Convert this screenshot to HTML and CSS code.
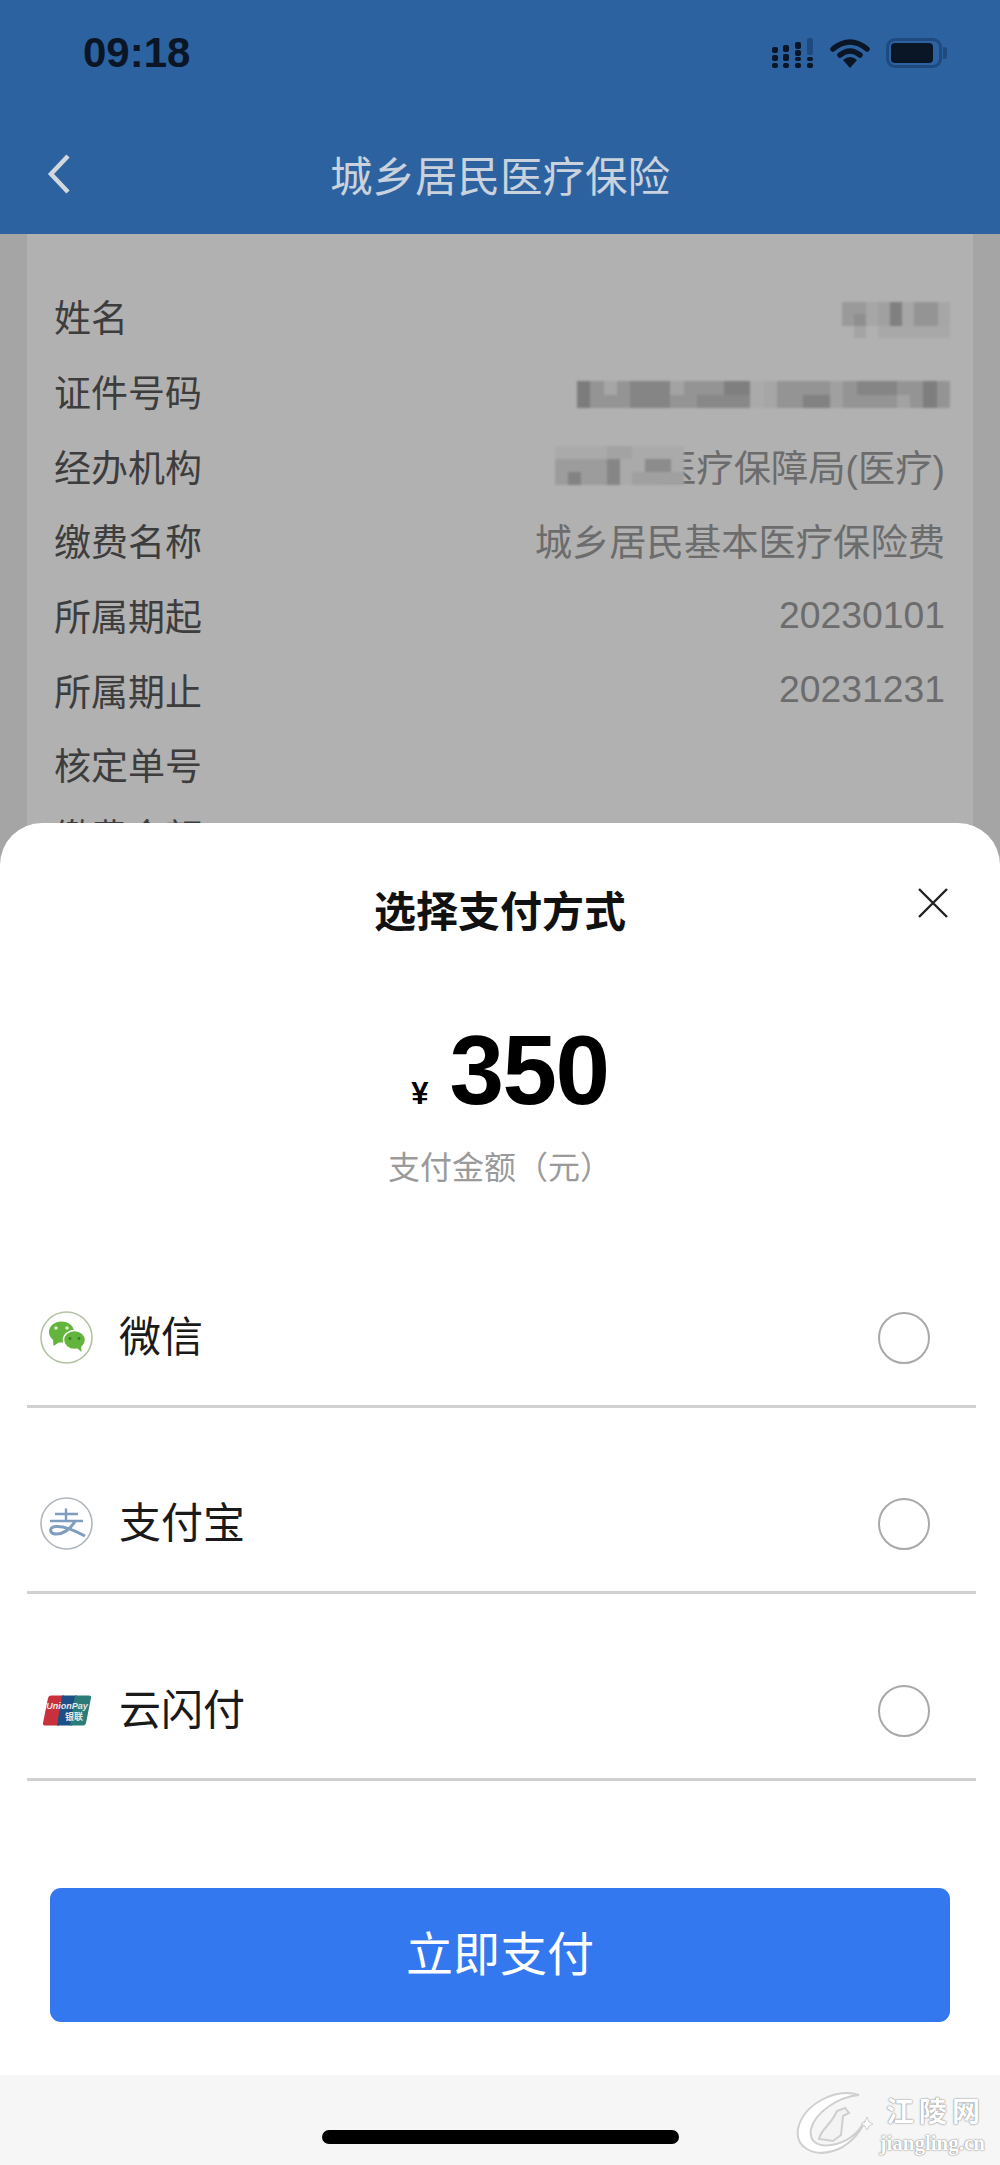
FILE: index.html
```html
<!doctype html>
<html>
<head>
	<meta charset="utf-8">
	<title>城乡居民医疗保险</title>
	<link rel="stylesheet" href="styles.css">
</head>
<body>
	<div class="page">
		<!-- 顶部蓝色区域 -->
		<div class="topbar">
			<div class="status">
				<span class="time">09:18</span>
				<div class="status-icons">
					<svg class="ic-signal" width="42" height="30" viewBox="0 0 42 30">
						<g fill="#0a1526">
							<rect x="0" y="9" width="6" height="6" rx="2"/><rect x="0" y="17" width="6" height="6" rx="2"/><rect x="0" y="25" width="6" height="5" rx="2"/>
							<rect x="11" y="7" width="6" height="7" rx="2"/><rect x="11" y="16" width="6" height="7" rx="2"/><rect x="11" y="25" width="6" height="5" rx="2"/>
							<rect x="23" y="4" width="6" height="7" rx="2"/><rect x="23" y="12" width="6" height="6" rx="2"/><rect x="23" y="19" width="6" height="4" rx="2"/><rect x="23" y="25" width="6" height="5" rx="2"/>
							<rect x="35" y="19" width="6" height="4" rx="2"/><rect x="35" y="25" width="6" height="5" rx="2"/>
						</g>
						<rect x="35" y="0" width="6" height="17" rx="2" fill="#1f4a80"/>
					</svg>
					<svg class="ic-wifi" width="40" height="30" viewBox="0 0 40 30">
						<path d="M3 11 Q20 -3 37 11" fill="none" stroke="#0a1526" stroke-width="5.5" stroke-linecap="round"/>
						<path d="M10 17 Q20 9 30 17" fill="none" stroke="#0a1526" stroke-width="5.5" stroke-linecap="round"/>
						<path d="M13 22 Q20 16 27 22 L20 30 Z" fill="#0a1526"/>
					</svg>
					<div class="battery"><span class="battery-in"></span><span class="battery-cap"></span></div>
				</div>
			</div>
			<div class="nav">
				<svg class="back" width="24" height="40" viewBox="0 0 24 40">
					<path d="M21 2 L4 20 L21 38" fill="none" stroke="#d3d8de" stroke-width="4.5"/>
				</svg>
				<span class="nav-title">城乡居民医疗保险</span>
			</div>
		</div>

		<!-- 被遮住的缴费信息 -->
		<div class="info">
			<div class="info-row">
				<span class="lab">姓名</span>
				<svg class="mosaic mosaic-name" width="108" height="39" viewBox="0 0 9 3" shape-rendering="crispEdges">
					<rect width="9" height="3" fill="#a6a6a6"/>
					<rect x="0" y="0" width="2" height="2" fill="#9a9a9a"/>
					<rect x="1" y="1" width="1" height="1" fill="#8f8f8f"/>
					<rect x="3" y="0" width="1" height="2" fill="#a0a0a0"/>
					<rect x="4" y="0" width="1" height="2" fill="#808080"/>
					<rect x="6" y="0" width="2" height="2" fill="#949494"/>
					<rect x="0" y="2" width="1" height="1" fill="#b1b1b1"/>
					<rect x="1" y="2" width="1" height="1" fill="#a4a4a4"/>
					<rect x="2" y="2" width="1" height="1" fill="#b1b1b1"/>
					<rect x="3" y="2" width="6" height="1" fill="#a8a8a8"/>
				</svg>
			</div>
			<div class="info-row">
				<span class="lab">证件号码</span>
				<svg class="mosaic mosaic-id" width="373" height="27" viewBox="0 0 28 2" shape-rendering="crispEdges">
					<rect width="28" height="2" fill="#949494"/>
					<rect x="0" y="0" width="1" height="2" fill="#7c7c7c"/>
					<rect x="2" y="0" width="1" height="1" fill="#a6a6a6"/>
					<rect x="4" y="0" width="3" height="2" fill="#858585"/>
					<rect x="7" y="0" width="1" height="1" fill="#a3a3a3"/>
					<rect x="9" y="1" width="4" height="1" fill="#888"/>
					<rect x="11" y="0" width="2" height="1" fill="#7f7f7f"/>
					<rect x="13" y="0" width="1" height="2" fill="#aaa"/>
					<rect x="14" y="0" width="1" height="2" fill="#a6a6a6"/>
					<rect x="17" y="1" width="2" height="1" fill="#828282"/>
					<rect x="19" y="0" width="1" height="2" fill="#a0a0a0"/>
					<rect x="21" y="0" width="3" height="1" fill="#858585"/>
					<rect x="24" y="1" width="1" height="1" fill="#a2a2a2"/>
					<rect x="26" y="0" width="1" height="2" fill="#7e7e7e"/>
				</svg>
			</div>
			<div class="info-row">
				<span class="lab">经办机构</span>
				<div class="val-wrap">
					<svg class="mosaic mosaic-org" width="129" height="45" viewBox="0 0 10 3" shape-rendering="crispEdges">
						<rect width="10" height="3" fill="#aaa"/>
						<rect x="4" y="0" width="2" height="1" fill="#a3a3a3"/>
						<rect x="0" y="1" width="5" height="2" fill="#9c9c9c"/>
						<rect x="1" y="2" width="1" height="1" fill="#838383"/>
						<rect x="4" y="1" width="1" height="2" fill="#868686"/>
						<rect x="7" y="1" width="2" height="1" fill="#8c8c8c"/>
						<rect x="6" y="2" width="4" height="1" fill="#a0a0a0"/>
					</svg>
					<span class="val">医疗保障局(医疗)</span>
				</div>
			</div>
			<div class="info-row"><span class="lab">缴费名称</span><span class="val">城乡居民基本医疗保险费</span></div>
			<div class="info-row"><span class="lab">所属期起</span><span class="val">20230101</span></div>
			<div class="info-row"><span class="lab">所属期止</span><span class="val">20231231</span></div>
			<div class="info-row"><span class="lab">核定单号</span></div>
			<div class="info-row info-row-last"><span class="lab">缴费金额</span></div>
		</div>

		<!-- 支付方式弹层 -->
		<div class="sheet-wrap">
			<div class="sheet">
				<div class="sheet-title">选择支付方式</div>
				<svg class="close" width="32" height="32" viewBox="0 0 32 32">
					<path d="M2 2 L30 30 M30 2 L2 30" stroke="#222" stroke-width="2.4" fill="none"/>
				</svg>
				<div class="amount"><span class="yen">¥</span><span class="num">350</span></div>
				<div class="amount-lab">支付金额（元）</div>

				<div class="pay-list">
					<div class="pay-row">
						<svg class="pay-ic" width="53" height="53" viewBox="0 0 53 53">
							<circle cx="26.5" cy="26.5" r="25.5" fill="#fff" stroke="#b4c2a4" stroke-width="1.6"/>
							<ellipse cx="21.5" cy="21" rx="12.500" ry="10.500" fill="#63b43c"/>
							<path d="M13 28 L13.500 35 L21 30 Z" fill="#63b43c"/>
							<ellipse cx="34.500" cy="29" rx="11" ry="9.500" fill="#63b43c" stroke="#fff" stroke-width="1.500"/>
							<path d="M37 37 L41.500 41 L41 34 Z" fill="#63b43c"/>
							<circle cx="16" cy="17" r="1.800" fill="#d8edc8"/><circle cx="27" cy="17" r="1.800" fill="#d8edc8"/>
							<circle cx="30" cy="27.500" r="1.400" fill="#3d7c25"/><circle cx="39" cy="27.500" r="1.400" fill="#3d7c25"/>
						</svg>
						<span class="pay-name">微信</span>
						<span class="radio"></span>
					</div>
					<div class="pay-row">
						<svg class="pay-ic" width="53" height="53" viewBox="0 0 53 53">
							<circle cx="26.5" cy="26.5" r="25.5" fill="#fff" stroke="#b0b6bf" stroke-width="1.6"/>
							<path d="M15 17 H38 M26 11.500 V24 M10 24 H43" fill="none" stroke="#7f9dbf" stroke-width="2.400"/>
							<path d="M35 24 C31 32 22 38 15 37 C9 36 9 30 16 29.500 C24 29 34 33 45 39" fill="none" stroke="#7f9dbf" stroke-width="3"/>
						</svg>
						<span class="pay-name">支付宝</span>
						<span class="radio"></span>
					</div>
					<div class="pay-row">
						<svg class="pay-ic" width="53" height="53" viewBox="0 0 53 53">
							<path d="M11 11.500 H24 L19 41.500 H5 Q2.500 41.500 3 39 L8 14 Q8.500 11.500 11 11.500 Z" fill="#c8303c"/>
							<path d="M22 11.500 H37 L32 41.500 H17 Z" fill="#1c4f86"/>
							<path d="M35 11.500 H49 Q51.500 11.500 51 14 L46 39 Q45.500 41.500 43 41.500 H30 Z" fill="#2a7c78"/>
							<text x="27" y="25" class="up-en" text-anchor="middle">UnionPay</text>
							<text x="34" y="36" class="up-cn" text-anchor="middle">银联</text>
						</svg>
						<span class="pay-name">云闪付</span>
						<span class="radio"></span>
					</div>
				</div>

				<div class="pay-btn">立即支付</div>
			</div>
			<div class="home-bar"><span class="home-line"></span></div>
		</div>

		<!-- 水印 -->
		<div class="wm">
			<svg width="78" height="64" viewBox="0 0 78 64">
				<path d="M64 4 C40 -4 8 14 3 38 C0 56 18 66 38 60 C52 56 64 44 70 30 C62 44 50 52 36 54 C22 56 14 50 16 38 C20 22 42 6 64 4 Z" fill="#fff" stroke="#cfcfcf" stroke-width="2"/>
				<path d="M24 48 C26 38 36 34 42 20 L50 17 L54 22 L48 25 L46 44 L38 50 Z" fill="#f3f3f3" stroke="#cfcfcf" stroke-width="2"/>
				<path d="M72 26 L74 31 L78 33 L74 35 L72 39 L70 35 L66 33 L70 31 Z" fill="#fff" stroke="#cfcfcf"/>
			</svg>
			<div class="wm-text">
				<span class="wm-cn">江陵网</span>
				<span class="wm-en">jiangling.cn</span>
			</div>
		</div>
	</div>
</body>
</html>
```

FILE: styles.css
```css
* { margin: 0; padding: 0; box-sizing: border-box; }
html, body { height: 100%; }
body {
	font-family: "Liberation Sans", "Noto Sans CJK SC", sans-serif;
	background: #a5a5a5;
}
.page {
	position: relative;
	width: 1000px;
	height: 2165px;
	overflow: hidden;
	background: #a5a5a5;
}

/* 顶部 */
.topbar {
	height: 234px;
	background: #2c62a0;
	padding: 0 53px 0 0;
}
.status {
	display: flex;
	justify-content: space-between;
	align-items: center;
	height: 106px;
	padding-left: 83px;
}
.time {
	font-size: 42px;
	font-weight: bold;
	color: #0a1526;
}
.status-icons {
	display: flex;
	align-items: center;
	gap: 16px;
}
.battery {
	position: relative;
	width: 56px;
	height: 30px;
	border: 3px solid #1f4a80;
	border-radius: 9px;
	padding: 2px;
	margin-right: 5px;
}
.battery-in {
	display: block;
	width: 42px;
	height: 20px;
	background: #0a1526;
	border-radius: 4px;
}
.battery-cap {
	position: absolute;
	right: -8px;
	top: 6px;
	width: 4px;
	height: 12px;
	background: #1f4a80;
	border-radius: 0 3px 3px 0;
}
.nav {
	position: relative;
	display: flex;
	justify-content: center;
	align-items: center;
	height: 128px;
	padding-left: 53px;
}
.back {
	position: absolute;
	left: 47px;
	top: 48px;
}
.nav-title {
	font-size: 42.500px;
	color: #c9d2dd;
	line-height: 60px;
	margin-top: 15px;
}

/* 信息卡片 */
.info {
	margin: 0 27px;
	height: 800px;
	background: #b1b1b1;
	padding: 45px 28px 0 27px;
}
.info-row {
	display: flex;
	justify-content: space-between;
	align-items: center;
	height: 74.7px;
	font-size: 37px;
}
.info-row-last { margin-top: -4px; }
.lab { color: #3d3d3d; }
.val { color: #6c6c6c; font-size: 37.300px; }
.val-wrap { position: relative; }
.mosaic { display: block; filter: blur(1.2px); }
.mosaic-name { margin: 6px -5px 0 0; }
.mosaic-id { margin: 6px -5px 0 0; }
.mosaic-org {
	position: absolute;
	left: -104px;
	top: 4px;
}

/* 弹层 */
.sheet-wrap {
	position: absolute;
	left: 0;
	right: 0;
	bottom: 0;
}
.sheet {
	position: relative;
	height: 1252px;
	background: #fff;
	border-radius: 42px 42px 0 0;
	padding-top: 60px;
}
.sheet-title {
	text-align: center;
	font-size: 42px;
	font-weight: bold;
	line-height: 60px;
	color: #111;
}
.close {
	position: absolute;
	right: 51px;
	top: 64px;
}
.amount {
	display: flex;
	justify-content: center;
	align-items: baseline;
	margin-top: 67px;
	padding-left: 20px;
	height: 120px;
	color: #000;
	font-weight: bold;
}
.yen { font-size: 31px; margin-right: 21px; }
.num { font-size: 98px; line-height: 120px; letter-spacing: -1.500px; }
.amount-lab {
	text-align: center;
	font-size: 32px;
	line-height: 46px;
	color: #9a9a9a;
	margin-top: 15px;
}
.pay-list { margin-top: 30px; }
.pay-row {
	display: flex;
	align-items: flex-end;
	height: 186.5px;
	margin: 0 24px 0 27px;
	padding: 0 46px 41px 13px;
	border-bottom: 3px solid #d0d0d0;
}
.pay-ic { display: block; flex: none; }
.pay-name {
	flex: 1;
	margin-left: 26px;
	font-size: 42px;
	line-height: 53px;
	color: #1a1a1a;
}
.radio {
	width: 52px;
	height: 52px;
	border: 2px solid #a9a9a9;
	border-radius: 50%;
}
.up-en {
	font: italic bold 9px "Liberation Sans", sans-serif;
	fill: #e8e8e8;
}
.up-cn {
	font: bold 9px "Noto Sans CJK SC", sans-serif;
	fill: #e8e8e8;
}
.pay-btn {
	margin: 107px 50px 0;
	height: 134px;
	line-height: 134px;
	background: #3478f0;
	border-radius: 11px;
	text-align: center;
	font-size: 47px;
	color: #fff;
}
.home-bar {
	display: flex;
	justify-content: center;
	height: 90px;
	padding-top: 55px;
	background: #f6f6f6;
}
.home-line {
	width: 357px;
	height: 14px;
	background: #000;
	border-radius: 7px;
}

/* 水印 */
.wm {
	position: absolute;
	right: 15px;
	bottom: 10px;
	display: flex;
	align-items: center;
	gap: 6px;
}
.wm-text {
	display: flex;
	flex-direction: column;
	align-items: flex-end;
	color: #fff;
	text-shadow: 0 0 2px #888, 0 0 1px #888;
}
.wm-cn {
	font: bold 28px/41px "Noto Sans CJK SC", sans-serif;
	letter-spacing: 5px;
}
.wm-en { font: bold 21px/24px "Liberation Serif", serif; }
```
